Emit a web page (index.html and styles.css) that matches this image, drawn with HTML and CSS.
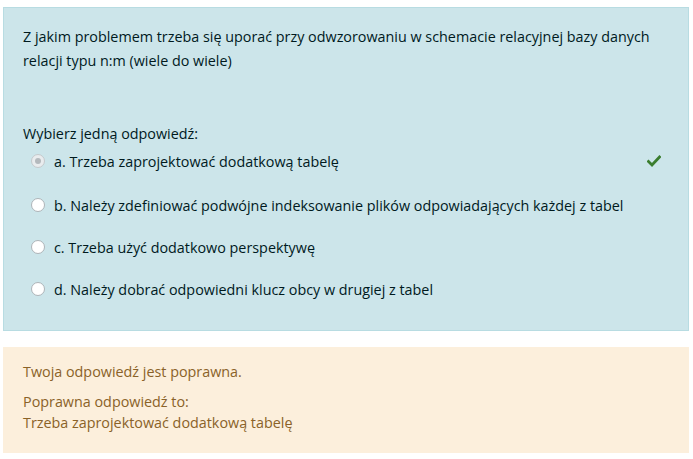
FILE: index.html
```html
<!DOCTYPE html>
<html lang="pl">
<head>
<meta charset="utf-8">
<title>Pytanie</title>
<link rel="stylesheet" href="styles.css">
</head>
<body>
<div class="que">
  <div class="formulation">
    <div class="qtext">Z jakim problemem trzeba się uporać przy odwzorowaniu w schemacie relacyjnej bazy danych relacji typu n:m (wiele do wiele)</div>
    <div class="prompt">Wybierz jedną odpowiedź:</div>
    <div class="answers">
      <div class="answer">
        <span class="radio checked"></span>
        <span class="label">a. Trzeba zaprojektować dodatkową tabelę</span>
        <svg class="tick" width="14" height="12" viewBox="0 0 14 12"><path d="M1.5 6.5 L5 10 L12.5 2" fill="none" stroke="#3a7d2e" stroke-width="2.8" stroke-linecap="square"/></svg>
      </div>
      <div class="answer">
        <span class="radio"></span>
        <span class="label">b. Należy zdefiniować podwójne indeksowanie plików odpowiadających każdej z tabel</span>
      </div>
      <div class="answer">
        <span class="radio"></span>
        <span class="label">c. Trzeba użyć dodatkowo perspektywę</span>
      </div>
      <div class="answer">
        <span class="radio"></span>
        <span class="label">d. Należy dobrać odpowiedni klucz obcy w drugiej z tabel</span>
      </div>
    </div>
  </div>
  <div class="outcome">
    <p class="feedback">Twoja odpowiedź jest poprawna.</p>
    <p class="right">Poprawna odpowiedź to:<br>Trzeba zaprojektować dodatkową tabelę</p>
  </div>
</div>
</body>
</html>
```

FILE: styles.css
```css
html, body {
  margin: 0;
  padding: 0;
  background: #ffffff;
}
body {
  font-family: "Open Sans", "Noto Sans", sans-serif;
  font-size: 14.35px;
}
.que {
  padding: 7px 4px 0 3px;
}
.formulation {
  background: #cce5ea;
  border: 1px solid #b8dce2;
  color: #001a1e;
  padding: 17px 20px 18px 19px;
  height: 287px;
}
.qtext {
  line-height: 24px;
}
.prompt {
  margin-top: 49px;
  line-height: 24px;
}
.answers {
  padding-left: 8px;
  padding-top: 3px;
}
.answer {
  display: flex;
  align-items: center;
  height: 42px;
  margin-top: -10px;
  margin-bottom: 10px;
}
.answer:first-child {
  height: 24px;
  margin-top: 0;
  margin-bottom: 21px;
}
.radio {
  width: 12px;
  height: 12px;
  border: 1px solid #aeb4b8;
  border-radius: 50%;
  background: #ffffff;
  margin-right: 9px;
  flex: none;
  box-sizing: content-box;
  position: relative;
}
.radio.checked {
  background: #e9ecee;
  border-color: #c4c9cc;
}
.radio.checked::after {
  content: "";
  position: absolute;
  left: 3px;
  top: 3px;
  width: 6px;
  height: 6px;
  border-radius: 50%;
  background: #b4b9bd;
}
.label {
  flex: 1;
}
.tick {
  margin-right: 7px;
}
.outcome {
  margin-top: 16px;
  background: #fcefdc;
  color: #8a6228;
  padding: 14px 20px 20px 20px;
}
.outcome p {
  margin: 0;
  line-height: 21px;
}
.outcome .feedback {
  margin-bottom: 9px;
}
```
